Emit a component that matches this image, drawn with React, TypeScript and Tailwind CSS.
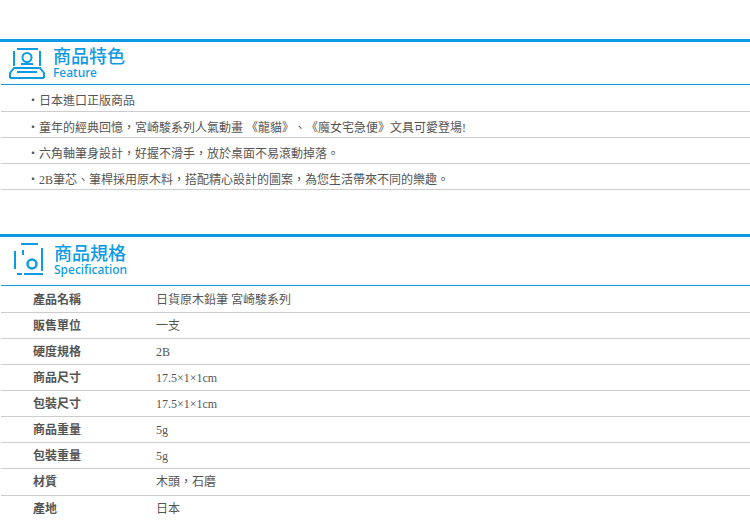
import React from 'react';

const cjk = "font-['Liberation_Serif','Noto_Sans_CJK_TC',serif]";

const features = [
  '日本進口正版商品',
  '童年的經典回憶，宮崎駿系列人氣動畫 《龍貓》、《魔女宅急便》文具可愛登場!',
  '六角軸筆身設計，好握不滑手，放於桌面不易滾動掉落。',
  '2B筆芯、筆桿採用原木料，搭配精心設計的圖案，為您生活帶來不同的樂趣。',
];

const specs = [
  ['產品名稱', '日貨原木鉛筆 宮崎駿系列'],
  ['販售單位', '一支'],
  ['硬度規格', '2B'],
  ['商品尺寸', '17.5×1×1cm'],
  ['包裝尺寸', '17.5×1×1cm'],
  ['商品重量', '5g'],
  ['包裝重量', '5g'],
  ['材質', '木頭，石磨'],
  ['產地', '日本'],
];

function FeatureIcon() {
  return (
    <svg width="36" height="31" viewBox="0 0 36 31" fill="none" stroke="#0d9be3" strokeWidth="2">
      <path d="M8 1h21M5 3v15M31 3v15M1 30v-5l4-5h26l4 5v5M12 16h12M8 24h20M1 30h34" />
      <circle cx="18" cy="9.5" r="4.5" />
    </svg>
  );
}

function SpecIcon() {
  return (
    <svg width="32" height="32" viewBox="0 0 32 32" fill="none" stroke="#0d9be3" strokeWidth="2">
      <path d="M8 1h17M29 5v23M2 8v18M10 7v5M4 31h5M11 31h19" />
      <circle cx="19" cy="21" r="4.5" strokeWidth="2.5" />
    </svg>
  );
}

function SectionHead({ title, sub, icon, iconClass, textClass }: { title: string; sub: string; icon: React.ReactNode; iconClass: string; textClass: string }) {
  return (
    <div className="border-t-[3px] border-[#0d9be3]">
      <div className="flex items-center border-b border-[#0d9be3] ml-px">
        <div className={iconClass}>{icon}</div>
        <div className={`flex flex-col ${textClass}`}>
          <span className="text-[18px] leading-[20px] font-medium text-[#0d9be3] font-['Noto_Sans_CJK_TC',sans-serif]">{title}</span>
          <span className="mt-px text-[12px] leading-[14px] font-medium text-[#0d9be3] font-['Noto_Sans',sans-serif]">{sub}</span>
        </div>
      </div>
    </div>
  );
}

export default function App() {
  return (
    <div lang="zh-TW" className={`w-[750px] h-[528px] overflow-hidden bg-white pt-[39px] text-[12px] text-[#555] [text-spacing-trim:space-all] ${cjk}`}>
      <SectionHead
        title="商品特色"
        sub="Feature"
        icon={<FeatureIcon />}
        iconClass="ml-2 mr-[8px] h-[42px] pt-[6px]"
        textClass="pb-px"
      />
      <ul className="ml-px">
        {features.map(f => (
          <li key={f} className="h-[26px] pt-[4px] leading-[24px] border-b border-[#ccc] pl-[26px] first:h-[27px]">
            ・{f}
          </li>
        ))}
      </ul>

      <div className="mt-[44px]">
        <SectionHead
          title="商品規格"
          sub="Specification"
          icon={<SpecIcon />}
          iconClass="ml-3 mr-[9px] h-[48px] pt-[6px]"
          textClass="pb-[3px]"
        />
      </div>
      <div className="ml-px pt-[0.6px]">
        {specs.map(([label, value]) => (
          <div key={label} className="flex h-[26.14px] leading-[26px] border-b border-[#ccc] last:border-b-0">
            <span className="w-[155px] pl-[32px] font-bold">{label}</span>
            <span>{value}</span>
          </div>
        ))}
      </div>
    </div>
  );
}
